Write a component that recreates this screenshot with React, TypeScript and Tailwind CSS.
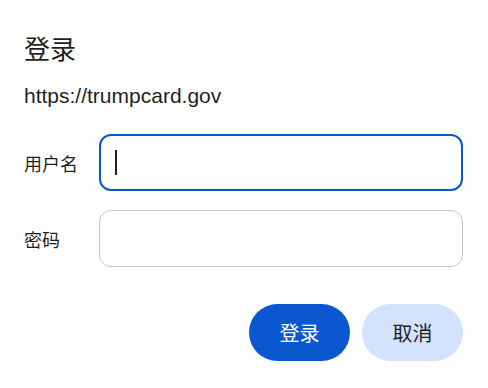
import React from "react";

export default function App() {
  return (
    <div className="w-[488px] h-[388px] bg-white pt-[30px] pl-6 pr-[25px] text-[#1f1f1f] font-['Noto_Sans_CJK_SC',sans-serif]">
      <div className="text-[26px] leading-[36px]">登录</div>
      <div className="mt-4 text-[21px] leading-[28px] font-['Liberation_Sans','Noto_Sans_CJK_SC',sans-serif]">
        https://trumpcard.gov
      </div>
      <div className="mt-[24px] flex items-center">
        <div className="w-[75px] text-[18px] leading-[24px]">用户名</div>
        <div className="w-[364px] h-[57px] rounded-[12px] border-2 border-[#0b57d0] flex items-center pl-[14px]">
          <div className="w-[2px] h-[25px] bg-[#1f1f1f]" />
        </div>
      </div>
      <div className="mt-[19px] flex items-center">
        <div className="w-[75px] text-[18px] leading-[24px]">密码</div>
        <div className="w-[364px] h-[57px] rounded-[12px] border border-[#c7c7c7]" />
      </div>
      <div className="mt-[37px] flex justify-end gap-3">
        <button className="w-[101px] h-[57px] rounded-full bg-[#0b57d0] text-white text-[20px] leading-[28px]">
          登录
        </button>
        <button className="w-[101px] h-[57px] rounded-full bg-[#d3e3fd] text-[#1f1f1f] text-[20px] leading-[28px]">
          取消
        </button>
      </div>
    </div>
  );
}
